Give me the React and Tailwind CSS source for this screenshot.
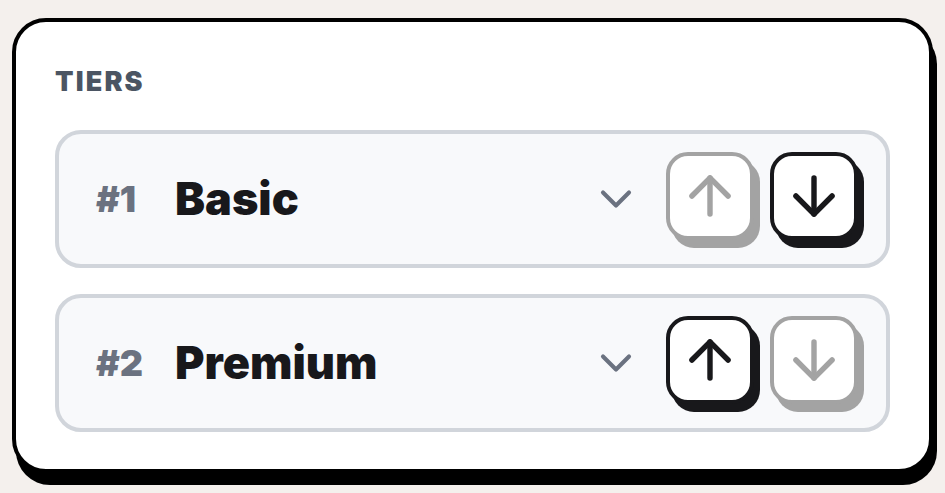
import { ArrowUp, ArrowDown, ChevronDown } from "lucide-react";

const tiers = [
  { id: 1, name: "Basic" },
  { id: 2, name: "Premium" },
];

function MoveButton({ dir, disabled }) {
  const Icon = dir === "up" ? ArrowUp : ArrowDown;
  return (
    <button
      disabled={disabled}
      className={
        disabled
          ? "w-[88px] h-[88px] flex items-center justify-center rounded-[22px] border-4 border-[#a3a3a3] bg-white text-[#a3a3a3] shadow-[6px_8px_0_0_#a3a3a3]"
          : "w-[88px] h-[88px] flex items-center justify-center rounded-[22px] border-4 border-[#18181b] bg-white text-[#18181b] shadow-[6px_8px_0_0_#18181b]"
      }
    >
      <Icon size={62} strokeWidth={2.1} />
    </button>
  );
}

function TierRow({ tier, index, total }) {
  return (
    <div className="h-[138px] flex items-center rounded-[26px] border-4 border-[#d1d5db] bg-[#f8f9fb] pl-[37px] pr-[28px]">
      <span className="w-[50px] text-[36px] font-black text-[#6b7280]">
        #{tier.id}
      </span>
      <span className="ml-[29px] text-[45px] font-black text-[#18181b]">
        {tier.name}
      </span>
      <ChevronDown className="ml-auto mr-[24px] text-[#6b7280]" size={52} strokeWidth={1.9} />
      <div className="flex gap-4 pb-[6px]">
        <MoveButton dir="up" disabled={index === 0} />
        <MoveButton dir="down" disabled={index === total - 1} />
      </div>
    </div>
  );
}

export default function App() {
  return (
    <div
      className="min-h-screen bg-[#f4f0ed] pt-[18px] px-[12px]"
      style={{ fontFamily: "Inter, 'Noto Sans', sans-serif" }}
    >
      <div className="h-[455px] rounded-[34px] border-4 border-black bg-white shadow-[4px_12px_0_0_#000] px-[39px] pt-[46px]">
        <h2 className="text-[27px] leading-none font-black tracking-[0.08em] text-[#4b5563]">
          TIERS
        </h2>
        <div className="mt-[35px] flex flex-col gap-[26px]">
          {tiers.map((t, i) => (
            <TierRow key={t.id} tier={t} index={i} total={tiers.length} />
          ))}
        </div>
      </div>
    </div>
  );
}
